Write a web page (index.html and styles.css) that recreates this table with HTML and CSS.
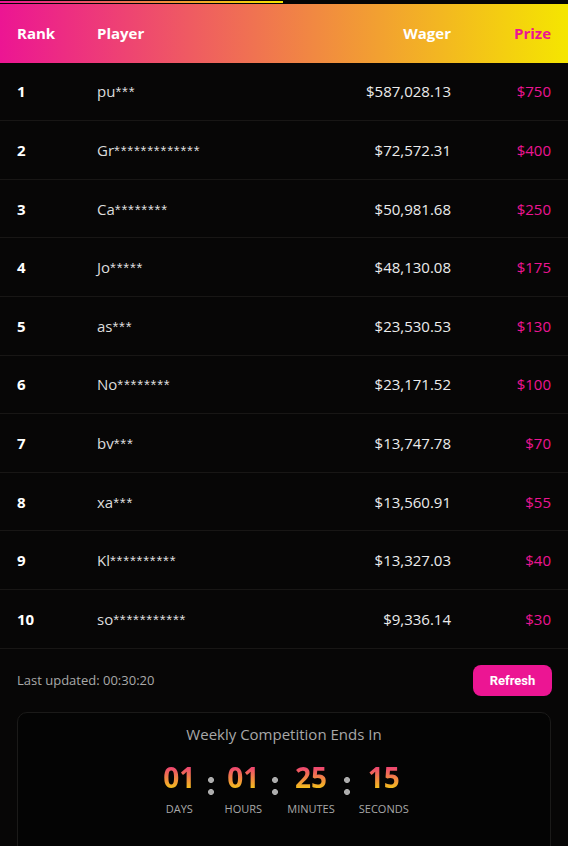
FILE: index.html
```html
<!DOCTYPE html>
<html lang="en">
<head>
<meta charset="utf-8">
<title>Leaderboard</title>
<link rel="stylesheet" href="styles.css">
</head>
<body>
<div class="topbar"><div class="progress"></div></div>
<table class="board">
  <thead>
    <tr>
      <th class="c-rank">Rank</th>
      <th class="c-player">Player</th>
      <th class="c-wager">Wager</th>
      <th class="c-prize">Prize</th>
    </tr>
  </thead>
  <tbody>
    <tr><td class="c-rank">1</td><td class="c-player">pu<span class="mask">***</span></td><td class="c-wager">$587,028.13</td><td class="c-prize">$750</td></tr>
    <tr><td class="c-rank">2</td><td class="c-player">Gr<span class="mask">*************</span></td><td class="c-wager">$72,572.31</td><td class="c-prize">$400</td></tr>
    <tr><td class="c-rank">3</td><td class="c-player">Ca<span class="mask">********</span></td><td class="c-wager">$50,981.68</td><td class="c-prize">$250</td></tr>
    <tr><td class="c-rank">4</td><td class="c-player">Jo<span class="mask">*****</span></td><td class="c-wager">$48,130.08</td><td class="c-prize">$175</td></tr>
    <tr><td class="c-rank">5</td><td class="c-player">as<span class="mask">***</span></td><td class="c-wager">$23,530.53</td><td class="c-prize">$130</td></tr>
    <tr><td class="c-rank">6</td><td class="c-player">No<span class="mask">********</span></td><td class="c-wager">$23,171.52</td><td class="c-prize">$100</td></tr>
    <tr><td class="c-rank">7</td><td class="c-player">bv<span class="mask">***</span></td><td class="c-wager">$13,747.78</td><td class="c-prize">$70</td></tr>
    <tr><td class="c-rank">8</td><td class="c-player">xa<span class="mask">***</span></td><td class="c-wager">$13,560.91</td><td class="c-prize">$55</td></tr>
    <tr><td class="c-rank">9</td><td class="c-player">Kl<span class="mask">**********</span></td><td class="c-wager">$13,327.03</td><td class="c-prize">$40</td></tr>
    <tr><td class="c-rank">10</td><td class="c-player">so<span class="mask">***********</span></td><td class="c-wager">$9,336.14</td><td class="c-prize">$30</td></tr>
  </tbody>
</table>
<div class="footer">
  <span class="updated">Last updated: 00:30:20</span>
  <button class="refresh" type="button">Refresh</button>
</div>
<section class="countdown">
  <h2 class="cd-title">Weekly Competition Ends In</h2>
  <div class="cd-row">
    <div class="unit"><span class="num">01</span><span class="lbl">DAYS</span></div>
    <span class="colon"></span>
    <div class="unit"><span class="num">01</span><span class="lbl">HOURS</span></div>
    <span class="colon"></span>
    <div class="unit"><span class="num">25</span><span class="lbl">MINUTES</span></div>
    <span class="colon"></span>
    <div class="unit"><span class="num">15</span><span class="lbl">SECONDS</span></div>
  </div>
</section>
</body>
</html>
```

FILE: styles.css
```css
* { box-sizing: border-box; }
html, body { margin: 0; padding: 0; }
body {
  background: #070606;
  font-family: "Open Sans", "Noto Sans", sans-serif;
  color: #e6e6e6;
  width: 568px;
  min-height: 846px;
  overflow: hidden;
}
.topbar {
  height: 4px;
  padding-top: 1px;
  background: #050505;
}
.progress {
  width: 283px;
  height: 2px;
  background: linear-gradient(90deg, #ec1593, #f5e600);
}
.board {
  width: 100%;
  border-collapse: separate;
  border-spacing: 0;
  font-size: 15px;
}
.board thead tr {
  background: linear-gradient(90deg, #ec1593, #f5e600);
}
.board th {
  padding: 17.3px 17px;
  line-height: 24px;
  font-weight: 700;
  color: #fff;
  text-align: left;
}
.board td {
  padding: 16.8px 17px;
  line-height: 24px;
  border-bottom: 1px solid #181615;
}
.c-rank { width: 80px; font-weight: 700; color: #fff; }
.board td.c-rank { font-weight: 700; color: #fff; }
.c-player { color: #dcdcdc; }
.mask {
  font-family: "Liberation Sans", Arial, sans-serif;
  letter-spacing: 0.8px;
  line-height: 1;
}
.board .c-wager { text-align: right; color: #ececec; }
.board .c-prize { width: 100px; text-align: right; color: #ec1593; }
.board th.c-prize { color: #ec1593; }
.board th.c-wager { color: #fff; }
.footer {
  display: flex;
  justify-content: space-between;
  align-items: center;
  padding: 16px 16px 16px 17px;
}
.updated {
  font-size: 13px;
  color: #a9a9a9;
}
.refresh {
  height: 31px;
  width: 79px;
  border: 0;
  border-radius: 8px;
  background: #ec1593;
  color: #fff;
  font-family: Roboto, "Liberation Sans", sans-serif;
  font-weight: 700;
  font-size: 13px;
  padding: 0;
}
.countdown {
  margin: 0 17px;
  border: 1px solid #1b1a19;
  border-radius: 10px;
  background: #040404;
  padding: 11px 16px 60px;
  text-align: center;
}
.cd-title {
  margin: 0;
  font-size: 15px;
  font-weight: 400;
  line-height: 20px;
  color: #a8a8a8;
}
.cd-row {
  margin-top: 15px;
  display: flex;
  justify-content: center;
  align-items: flex-start;
  gap: 9px;
}
.unit {
  min-width: 40px;
  display: flex;
  flex-direction: column;
  align-items: center;
}
.num {
  font-size: 28px;
  font-weight: 700;
  line-height: 36px;
  background: linear-gradient(180deg, #ec1593 0%, #f5e600 100%);
  -webkit-background-clip: text;
  background-clip: text;
  color: transparent;
}
.lbl {
  margin-top: 7px;
  font-size: 11px;
  line-height: 14px;
  color: #a8a8a8;
}
.colon {
  width: 6px;
  height: 18px;
  margin-top: 18px;
  background:
    radial-gradient(circle, #adadad 2.7px, transparent 3.2px) top / 6px 6px no-repeat,
    radial-gradient(circle, #adadad 2.7px, transparent 3.2px) bottom / 6px 6px no-repeat;
}
```
